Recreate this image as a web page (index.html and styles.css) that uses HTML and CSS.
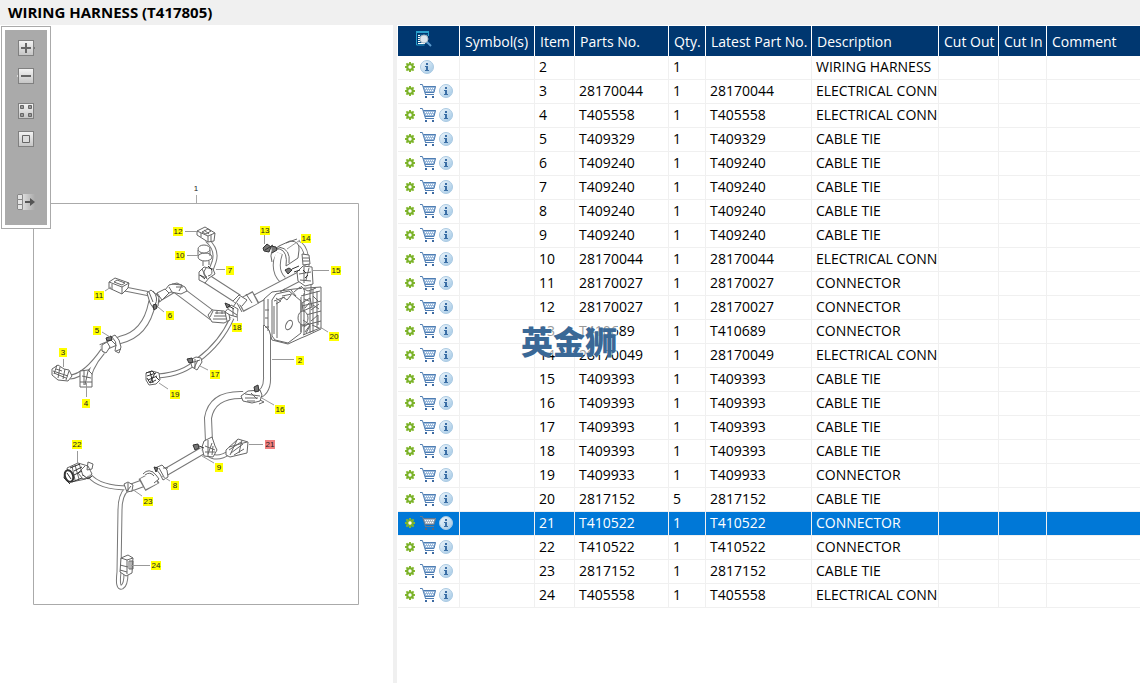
FILE: index.html
```
<!DOCTYPE html>
<html lang="en">
<head>
  <meta charset="UTF-8">
  <meta name="viewport" content="width=device-width, initial-scale=1.0">
  <link rel="stylesheet" href="styles.css">
  <title>Wiring Harness (T417805)</title>
</head>
<body>
  <!-- shared icons -->
  <svg class="sprite" aria-hidden="true">
    <defs>
      <linearGradient id="key-fill" x1="0" y1="0" x2="0" y2="1">
        <stop offset="0" stop-color="#f4f4f4"/>
        <stop offset="1" stop-color="#c4c4c4"/>
      </linearGradient>
      <linearGradient id="fade-fill" x1="0" y1="0" x2="1" y2="0">
        <stop offset="0" stop-color="#f4f4f4"/>
        <stop offset="1" stop-color="#aaaaaa"/>
      </linearGradient>
      <linearGradient id="info-fill" x1="0" y1="0" x2="1" y2="1">
        <stop offset="0" stop-color="#f2f8fc"/>
        <stop offset="1" stop-color="#9fc6e4"/>
      </linearGradient>
    </defs>
    <symbol id="gear" viewBox="0 0 10 10">
      <path d="M5 0v10M0 5h10M1.4 1.4l7.2 7.2M8.6 1.4L1.4 8.6" stroke="#86ba30" stroke-width="2"/>
      <circle cx="5" cy="5" r="2.8" fill="none" stroke="#7ab12a" stroke-width="2"/>
      <circle class="gear-hole" cx="5" cy="5" r="1.7"/>
    </symbol>
    <symbol id="cart" viewBox="0 0 16 14">
      <path d="M3 2h13l-2 6H5z" fill="#9dbbdc"/>
      <path d="M5 4h1v1H5zM7 4h1v1H7zM9 4h1v1H9zM11 4h1v1h-1zM13 4h1v1h-1zM6 6h1v1H6zM8 6h1v1H8zM10 6h1v1h-1zM12 6h1v1h-1z" fill="#ffffff"/>
      <path d="M0 .5h2.4L5.5 10.500M3.500 2.500h12l-1.500 6H5M5 10.500h9" fill="none" stroke="#4e7db3"/>
      <path d="M5 12h2v2H5zM12 12h2v2h-2z" fill="#3d6ba3"/>
    </symbol>
    <symbol id="info" viewBox="0 0 14 14">
      <circle cx="7" cy="7" r="6.5" fill="url(#info-fill)" stroke="#a9c9e2"/>
      <path d="M6 3h2v2H6zM5 6h3v4h1v1H5v-1h1V7H5z" fill="#3a6ea5"/>
    </symbol>
    <symbol id="find" viewBox="0 0 16 16">
      <path d="M.5 1v13h8M.5 1h12v4" fill="none" stroke="#2aa0cc"/>
      <path d="M0 0h13v2H0z" fill="#2aa0cc"/>
      <path d="M2 3h10v10H2z" fill="#0d5488"/>
      <path d="M2 4.5h2M2 6.5h2M2 8.5h2M2 10.5h2M2 12.5h7" stroke="#ffffff"/>
      <circle cx="8" cy="8" r="4" fill="#dbe6ee" stroke="#aab8c4"/>
      <path d="M11 11l4 4" stroke="#5c9cd0" stroke-width="2"/>
    </symbol>
  </svg>

  <header class="title-bar">
    <h1>WIRING HARNESS (T417805)</h1>
  </header>

  <main class="viewer">
    <section class="drawing-pane">
      <div class="toolbar">
        <button class="tool" aria-label="Zoom in">
          <svg viewBox="0 0 20 16"><path d="M16 5l3 3-3 3" fill="#eeeeee" stroke="#777777"/><rect x="2.5" y=".5" width="15" height="15" fill="url(#key-fill)" stroke="#808080"/><path d="M10 3v10M5 8h10" stroke="#666666" stroke-width="2"/></svg>
        </button>
        <button class="tool" aria-label="Zoom out">
          <svg viewBox="0 0 20 16"><path d="M4 5L1 8l3 3" fill="#eeeeee" stroke="#dddddd"/><rect x="2.5" y=".5" width="15" height="15" fill="url(#key-fill)" stroke="#808080"/><path d="M5 8h10" stroke="#666666" stroke-width="2"/></svg>
        </button>
        <button class="tool tool-fit" aria-label="Fit to window">
          <svg viewBox="0 0 20 16"><rect x="2.5" y=".5" width="15" height="15" fill="url(#key-fill)" stroke="#808080"/><path d="M4.5 2.5h3v3h-3zM12.5 2.5h3v3h-3zM4.5 10.5h3v3h-3zM12.5 10.5h3v3h-3z" fill="#999999" stroke="#666666"/></svg>
        </button>
        <button class="tool" aria-label="Actual size">
          <svg viewBox="0 0 20 16"><rect x="2.5" y=".5" width="15" height="15" fill="url(#key-fill)" stroke="#808080"/><path d="M6.5 4.5h7v7h-7z" fill="#dddddd" stroke="#666666"/></svg>
        </button>
        <button class="tool tool-list" aria-label="Hide parts list">
          <svg viewBox="0 0 20 16"><path d="M1 0h18v16H1z" fill="url(#fade-fill)"/><path d="M1.5 .5h5v5h-5zM1.500 5.500h5v5h-5zM1.500 10.500h5v5h-5z" fill="#e4e4e4" stroke="#888888"/><path d="M9 8h7" stroke="#555555" stroke-width="2"/><path d="M14 4l5 4-5 4z" fill="#555555"/></svg>
        </button>
      </div>

      <svg class="drawing" viewBox="0 25 393 658" role="img" aria-label="Exploded view of wiring harness">
        <path class="frame" d="M33.5 203.5h325v401h-325zM196.5 203v-8"/>

        <!-- thin branches -->
        <path class="edge thin" d="M125 289L150 294M70 377Q85 376 103 350M87 386Q89 368 103 352M232 318Q221 343 198 360Q184 374 158 376M208 454Q217 461 230 452M89 475Q99 488 129 488M127 489Q120 495 120 510L119 572Q117 589 122 587Q126 585 126 573M207 240Q218 250 214 262L211 270M298 243Q307 246 307 266"/>
        <path class="core thin-core" d="M125 289L150 294M70 377Q85 376 103 350M87 386Q89 368 103 352M232 318Q221 343 198 360Q184 374 158 376M208 454Q217 461 230 452M89 475Q99 488 129 488M127 489Q120 495 120 510L119 572Q117 589 122 587Q126 585 126 573M207 240Q218 250 214 262L211 270M298 243Q307 246 307 266"/>

        <!-- main conduit -->
        <path class="edge" d="M101 348L120 340Q146 334 152 303L160 297L175 288M267 325V376Q268 393 255 396M243 395Q212 394 208 418L209 442M202 451L166 472M149 481L130 488M279 253Q273 271 283 280"/>
        <path class="core" d="M101 348L120 340Q146 334 152 303L160 297L175 288M267 325V376Q268 393 255 396M243 395Q212 394 208 418L209 442M202 451L166 472M149 481L130 488M279 253Q273 271 283 280"/>
        <path class="edge wide" d="M177 289L213 316M207 279L238 299M256 299L304 274"/>
        <path class="core wide-core" d="M177 289L213 316M207 279L238 299M256 299L304 274"/>

        <!-- sleeves -->
        <path class="edge sleeve" d="M240 306L256 297M142 485L156 477"/>
        <path class="core sleeve-core" d="M241 305L255 298M143 484L155 478"/>
        <path class="part" d="M275 249L279 246L290 241Q300 241 299 250L298 258L286 266Q288 252 280 249zM279 247Q291 249 289 263M272 262Q268 248 279 248M286 243L297 239"/>
        <path class="part" d="M165 290l4-5 8-2 8 4 2 4-6 3-10-2-6 3zM169 287l3 5M172 284l10 1-3 6M176 287h7M161 291l3 8M156 293l4 9"/>
        <path class="part" d="M208 315l4-5 12 1 5 3 1 6-6 3-12-1zM213 311l-3 6M215 313h11M214 316h12M213 319h13M225 312l2 9M217 311v3M222 311v3"/>
        <path class="part" d="M225 312l6-7 7 4-1 8-7-2zM233 301l6-6 8 5-5 6M240 297l-7 10M228 309l9 6M237 303l5 9M246 294l6 9M233 308v8"/>

        <!-- control unit -->
        <path class="part" d="M264 299l8-7 22-3 27-2v42l-15 7-5 2-13 6-16-4-3-10-5-5zM272 300l4-6 13-3 12 10v32l-13 10-13-3-3-4zM274 301l11-4M268 299v32M277 301v37M301 296l19-5M302 306l19-5M302 316l19-5M302 326l19-5M303 335l17-7"/>
        <ellipse class="part" cx="303" cy="318" rx="5" ry="7"/>
        <path class="part fine" d="M301 297v35M304 293v42M310 291v42M313 289v43M317 291v37M276 298l4 3 3-4 4 3 4-5M276 304l5-3M302 303l8-5 2 9-9 4zM303 320l7 5-5 7M311 310l8-6M311 321l7-6v10M265 310h4M265 318h3M265 327h4M280 292l5-3M291 290l5 6M304 299l5 2M305 308l4-5M313 296l5 5M313 305l6 4M304 327l5-4M312 325l7 3M306 333l4-7M274 306v28M282 296l10-2M294 292l6-5 8 4 8-3"/>
        <ellipse class="part" cx="289" cy="325" rx="3" ry="5" transform="rotate(25 289 325)"/>
        <path class="part" d="M297 272l6-6 9 1 1 17-8 2-7-5zM302 254l7 1 1 9-7 1zM301 286q5 4 3 9M311 285v8M299 274l12-2M300 280l11 1M304 267v16M309 268l-3 12M303 258h6M303 261h6"/>
        <path class="dark" d="M285 270l4-2 3 2-4 4zM292 269l7-3M294 272l6-2M263 248l4-4 4 3-2 5-5-1zM271 246l5 1 1 3-5 3M265 250l8-5M303 270l3 3M305 278l3-3"/>

        <!-- connectors -->
        <path class="part" d="M197 231l8-4 10 6-1 8-6 1-11-7zM197 231l11 5v6M208 236l7-3M202 232l6-3 3 2-5 3zM201 233v4M211 235v6M204 230l5 4"/>
        <path class="part" d="M109 282l6-4 14 5-1 5-6 6-13-6zM109 282l13 5v7M122 287l7-4M114 282l3-2 8 3-3 2zM112 284v5"/>
        <path class="part" d="M52 369l6-4 6 4 5 1 3 6-4 5-10-1-6-5zM57 365l-3 9M60 367l-2 11M65 369l-2 10M69 371l-3 9M53 371l15 5M54 373l12 5M56 369l6 2"/>
        <path class="part" d="M80 371l8-1 4 4v13h-12v-8zM82 376l9 2M80 382h12M84 371v14M88 371l-3 14"/>
        <path class="part" d="M226 450l12-11 10 3-1 11-17 4-4-2zM237 440l-7 15M229 447l18-5M229 450l12-8M231 453l12-9M234 455l10-6M242 440l-3 13"/>
        <path class="part" d="M121 558l7-3 5 3-1 15-6 3-6-4zM121 558l6 2 6-2M127 560v14M129 561h4v8h-4zM120 565l8 2M120 570l7 2M131 561v8"/>
        <path class="part" d="M67 468l11-5 10 3 4 8-6 5-15 3zM72 466l3 14M75 465l4 14M79 463l4 13M85 466l-7 7 5 6 8-2M88 462l5 2-1 5-5 1z"/>
        <ellipse class="dark ring" cx="69" cy="476" rx="4" ry="6" transform="rotate(-20 69 476)"/>
        <path class="dark open" d="M65 472l-1 6 6 6M70 468l10-4M74 471l8-4M74 475l8-4M72 482l10-4M83 475l5 4 4-3M67 473l4 6"/>
        <path class="part" d="M146 373l6-2 7 2 1 7-4 4-7 1-3-5z"/>
        <path class="dark open" d="M146 373l6-2 3 3M147 376l9-3M148 380l9-4M150 372l3 11M155 373l-5 10M150 383l6-3M147 378l3 5M156 377l3 3"/>
        <ellipse class="part" cx="205" cy="257" rx="7" ry="4"/>
        <ellipse class="part" cx="204" cy="249" rx="6" ry="4"/>
        <path class="part" d="M198 250v6M210 250v6M203 261v5M209 261v4"/>

        <!-- clamps and ties -->
        <path class="part" d="M199 272l5-5 9 2 2 5-6 4-4 5-6-3zM202 269l5 10M206 268q-5 7 1 9M211 268q3 7-3 8M199 275l8 3"/>
        <path class="part" d="M147 293l4-3 8 7-1 9-4 3-4-6zM157 293l8-4 4 4-7 7zM149 292l4 10M153 291q6 7 2 14"/>
        <path class="part" d="M102 345l5-3 3 5-4 6-4-2zM109 338l6-3 4 5 2 7-2 6-4-2 1-6-5-5zM112 337q5 5 4 9M116 351l5-2"/>
        <path class="part" d="M190 360l6-3 5 1 1 4-5 8-5-3zM191 363l9-3M195 359v9M198 360l-4 8"/>
        <path class="part" d="M241 396l7-5 12-1 2 5-2 6-8 2-9-2zM245 394l15 2M245 398h13M251 393l6 6M260 400l4 2-5 2M247 401h8"/>
        <path class="part" d="M204 441l8-4 3 9 2 4-4 7-9-1-2-9zM205 446l10 4M205 452h10M208 440v16M212 443l-4 11M213 446l-1 9"/>
        <path class="part" d="M155 468l7-3 5 5 1 7-5 3-3-6zM159 468l5 9M143 474q6-7 13 1l3 4-5 4M145 475q5-4 9 1M163 468h5"/>
        <path class="part" d="M124 484l4-2 5 3-1 6-5 1zM128 483v8M131 486l-4 5"/>
        <path class="dark" d="M153 305l3-1 1 4-3 2zM106 338l5-2 1 4-5 1zM187 359l5-1 1 4-4 1zM254 387l4-2 1 6-4 1zM193 445l5-1 1 4-4 2zM199 446l5 2M154 467l4 1-2 4zM225 303l5 2-3 3zM229 306l5 3M200 275l5 4M208 266l4 4"/>

        <!-- leaders -->
        <path class="leader" d="M185 231.5h12M187 255.5h11M225 269.5h-9M264.5 235v9M300 240l-13 9M329 270.5h-17M328 332l-8-5M237.5 321v-12M164 312l-6-5M102 332l8 5M105 291l6-4M63.5 359v8M86.5 397v-14M208 370l-8-4M168 389l-9-6M294 359.5h-22M274 405l-14-8M263 444.5h-14M214 463l-12-7M170 481l-8-5M77.5 451v14M142 496l-10-7M150 565.5h-19"/>

        <text class="mark" x="196" y="191">1</text>
        <g id="callouts"></g>
      </svg>
    </section>

    <section class="parts-pane">
      <table class="parts-table">
        <colgroup>
          <col class="col-actions">
          <col class="col-symbol">
          <col class="col-item">
          <col class="col-part">
          <col class="col-qty">
          <col class="col-latest">
          <col class="col-desc">
          <col class="col-out">
          <col class="col-in">
          <col>
        </colgroup>
        <thead>
          <tr>
            <th class="find-cell"><button class="icon-button" aria-label="Search parts"><svg class="find"><use href="#find"/></svg></button></th>
            <th>Symbol(s)</th>
            <th>Item</th>
            <th>Parts No.</th>
            <th>Qty.</th>
            <th>Latest Part No.</th>
            <th>Description</th>
            <th>Cut Out</th>
            <th>Cut In</th>
            <th>Comment</th>
          </tr>
        </thead>
        <tbody id="parts"></tbody>
      </table>
      <div class="watermark" lang="zh">英金狮</div>
    </section>
  </main>

  <script>
    // item, part number, quantity, description
    const parts = [
      [2, '', 1, 'WIRING HARNESS'],
      [3, '28170044', 1, 'ELECTRICAL CONNECTOR'],
      [4, 'T405558', 1, 'ELECTRICAL CONNECTOR'],
      [5, 'T409329', 1, 'CABLE TIE'],
      [6, 'T409240', 1, 'CABLE TIE'],
      [7, 'T409240', 1, 'CABLE TIE'],
      [8, 'T409240', 1, 'CABLE TIE'],
      [9, 'T409240', 1, 'CABLE TIE'],
      [10, '28170044', 1, 'ELECTRICAL CONNECTOR'],
      [11, '28170027', 1, 'CONNECTOR'],
      [12, '28170027', 1, 'CONNECTOR'],
      [13, 'T410689', 1, 'CONNECTOR'],
      [14, '28170049', 1, 'ELECTRICAL CONNECTOR'],
      [15, 'T409393', 1, 'CABLE TIE'],
      [16, 'T409393', 1, 'CABLE TIE'],
      [17, 'T409393', 1, 'CABLE TIE'],
      [18, 'T409393', 1, 'CABLE TIE'],
      [19, 'T409933', 1, 'CONNECTOR'],
      [20, '2817152', 5, 'CABLE TIE'],
      [21, 'T410522', 1, 'CONNECTOR'],
      [22, 'T410522', 1, 'CONNECTOR'],
      [23, '2817152', 1, 'CABLE TIE'],
      [24, 'T405558', 1, 'ELECTRICAL CONNECTOR']
    ];

    // item, x, y of each callout centre on the drawing
    const callouts = [
      [12, 178, 231], [10, 180, 255], [7, 230, 270], [13, 265, 230],
      [14, 306, 238], [15, 336, 270], [20, 334, 336], [18, 237, 327],
      [6, 170, 315], [5, 97, 330], [11, 99, 295], [3, 63, 352],
      [4, 86, 403], [17, 215, 374], [19, 175, 394], [2, 300, 360],
      [16, 280, 409], [21, 270, 444], [9, 219, 467], [8, 175, 485],
      [22, 77, 444], [23, 148, 501], [24, 156, 565]
    ];

    let selected = 21;

    function iconButton(name, label) {
      return `<button class="icon-button" aria-label="${label}"><svg class="${name}"><use href="#${name}"/></svg></button>`;
    }

    function drawParts() {
      document.getElementById('parts').innerHTML = parts.map(([item, part, qty, desc]) => `
        <tr class="${item === selected ? 'selected' : ''}" onclick="selectItem(${item})">
          <td class="actions-cell"><div class="actions">${iconButton('gear', 'Options')}${part ? iconButton('cart', 'Add to cart') : ''}${iconButton('info', 'Information')}</div></td>
          <td></td><td>${item}</td><td>${part}</td><td>${qty}</td><td>${part}</td><td>${desc}</td><td></td><td></td><td></td>
        </tr>`).join('');
    }

    function drawCallouts() {
      document.getElementById('callouts').innerHTML = callouts.map(([item, x, y]) => {
        const width = item > 9 ? 10 : 8;
        return `<g class="callout ${item === selected ? 'active' : ''}" onclick="selectItem(${item})">
          <rect x="${x - width / 2}" y="${y - 4}" width="${width}" height="9"/>
          <text x="${x}" y="${y + 3}">${item}</text></g>`;
      }).join('');
    }

    function selectItem(item) {
      selected = item;
      drawParts();
      drawCallouts();
    }

    selectItem(selected);
  </script>
</body>
</html>
```

FILE: styles.css
```
* {
  box-sizing: border-box;
}

body {
  display: flex;
  flex-direction: column;
  height: 100vh;
  margin: 0;
  overflow: hidden;
  background-color: #ffffff;
  color: #000000;
  font-family: "Segoe UI", "Open Sans", "Noto Sans", sans-serif;
  font-size: 14px;
}

button {
  padding: 0;
  border: none;
  background: none;
  cursor: pointer;
}

svg {
  display: block;
}

.sprite {
  position: absolute;
  width: 0;
  height: 0;
}

.title-bar {
  flex: none;
  padding: 0 8px;
  background-color: #f0f0f0;
}

.title-bar h1 {
  margin: 0;
  font-size: 15px;
  line-height: 25px;
}

.viewer {
  display: flex;
  flex: 1;
  min-height: 0;
}

/* drawing */

.drawing-pane {
  position: relative;
  flex: none;
  width: 397px;
  border-right: 4px solid #f0f0f0;
}

.toolbar {
  position: absolute;
  top: 1px;
  left: 1px;
  display: flex;
  flex-direction: column;
  align-items: center;
  gap: 12px;
  width: 50px;
  padding: 13px 0 18px;
  border: 1px solid #aaaaaa;
  background-color: #aaaaaa;
  box-shadow: inset 0 0 0 3px #ffffff;
}

.tool svg {
  width: 20px;
  height: 16px;
}

.tool-fit {
  margin-top: 7px;
}

.tool-list {
  margin-top: 35px;
}

.drawing {
  width: 100%;
}

.drawing path,
.drawing ellipse {
  fill: none;
  stroke: #777777;
}

.drawing .frame {
  stroke: #aaaaaa;
}

.drawing .edge {
  stroke: #777777;
  stroke-width: 8px;
}

.drawing .core {
  stroke: #ffffff;
  stroke-width: 6px;
}

.drawing .thin {
  stroke-width: 5px;
}

.drawing .thin-core {
  stroke-width: 3px;
}

.drawing .wide {
  stroke-width: 10px;
}

.drawing .wide-core {
  stroke-width: 8px;
}

.drawing .sleeve {
  stroke-width: 14px;
}

.drawing .sleeve-core {
  stroke-width: 12px;
}

.drawing .part {
  fill: #ffffff;
  stroke: #666666;
}

.drawing .fine {
  fill: none;
}

.drawing .dark {
  fill: #777777;
  stroke: #333333;
}

.drawing .open {
  fill: none;
}

.drawing .ring {
  fill: #ffffff;
  stroke-width: 2px;
}

.drawing .leader {
  stroke: #999999;
}

.drawing text {
  font-family: "Liberation Sans", Arial, sans-serif;
  font-size: 8px;
  text-anchor: middle;
  fill: #222222;
}

.callout {
  cursor: pointer;
}

.callout rect {
  fill: #ffff00;
}

.callout.active rect {
  fill: #f08080;
}

/* parts list */

.parts-pane {
  position: relative;
  flex: 1;
  min-width: 0;
  padding: 1px 0 0 1px;
}

.parts-table {
  width: 100%;
  table-layout: fixed;
  border-collapse: separate;
  border-spacing: 0;
}

.col-actions { width: 62px; }
.col-symbol { width: 75px; }
.col-item { width: 40px; }
.col-part { width: 94px; }
.col-qty { width: 37px; }
.col-latest { width: 106px; }
.col-desc { width: 127px; }
.col-out { width: 60px; }
.col-in { width: 48px; }

.parts-table th {
  height: 30px;
  padding: 0 0 0 5px;
  border-right: 1px solid #ffffff;
  background-color: #003770;
  color: #ffffff;
  font-weight: normal;
  text-align: left;
  white-space: nowrap;
}

.parts-table td {
  height: 24px;
  padding: 0 0 2px 4px;
  border-right: 1px solid #f0f0f0;
  border-bottom: 1px solid #f0f0f0;
  line-height: 20px;
  white-space: nowrap;
  overflow: hidden;
}

.parts-table th:last-child,
.parts-table td:last-child {
  border-right: none;
}

.parts-table .find-cell {
  padding-left: 18px;
}

.parts-table .actions-cell {
  padding: 0 0 2px 7px;
}

.actions {
  display: flex;
  align-items: center;
  gap: 3px;
}

.gear {
  width: 10px;
  height: 10px;
  margin-right: 2px;
}

.gear-hole {
  fill: #ffffff;
}

.cart {
  width: 16px;
  height: 14px;
}

.info {
  width: 14px;
  height: 14px;
}

.find {
  width: 16px;
  height: 16px;
}

.selected td {
  background-color: #0078d7;
  color: #ffffff;
}

.selected .gear-hole {
  fill: #0078d7;
}

.selected .cart {
  filter: grayscale(0.6);
}

.watermark {
  position: absolute;
  top: 300px;
  left: 124px;
  background-color: rgba(255, 255, 255, 0.6);
  color: #3a6896;
  font-family: "Noto Sans CJK SC", sans-serif;
  font-size: 32px;
  font-weight: 900;
  line-height: 30px;
  pointer-events: none;
}
```
